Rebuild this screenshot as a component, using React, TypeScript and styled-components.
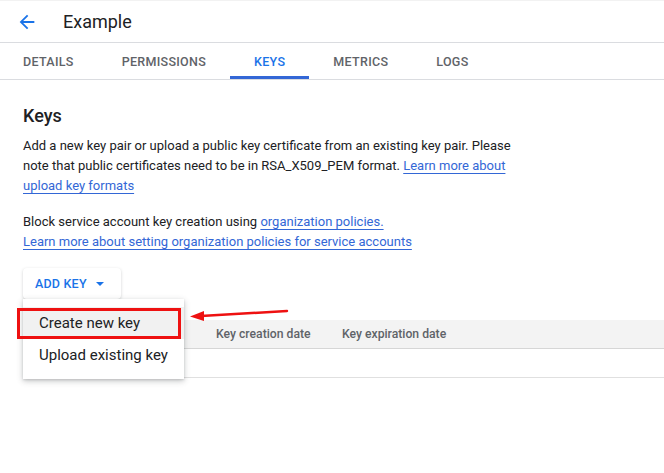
import React from "react";
import styled, { createGlobalStyle } from "styled-components";

const Global = createGlobalStyle`
  html, body { margin: 0; padding: 0; background: #fff; }
  body { font-family: Roboto, "Noto Sans", Arial, sans-serif; color: #202124; }
  * { box-sizing: border-box; }
`;

const Page = styled.div`
  position: relative;
  width: 664px;
  height: 473px;
  overflow: hidden;
  border-top: 1px solid #f2f2f2;
`;

const Header = styled.header`
  height: 42px;
  display: flex;
  align-items: center;
  padding-left: 16px;
  gap: 25px;
  border-bottom: 1px solid #dadce0;
`;

const Back = styled.span`
  display: flex;
  width: 22px;
  height: 22px;
  color: #1a73e8;
`;

const Title = styled.h1`
  margin: 0;
  font-size: 18px;
  font-weight: 400;
  color: #202124;
`;

const Tabs = styled.nav`
  display: flex;
  height: 37px;
  border-bottom: 1px solid #dadce0;
  margin-left: -1px;
`;

const Tab = styled.div<{ $active?: boolean }>`
  display: flex;
  align-items: center;
  padding: 0 24px;
  font-size: 12.5px;
  font-weight: 500;
  letter-spacing: 0.3px;
  color: ${(p) => (p.$active ? "#1a73e8" : "#5f6368")};
  border-bottom: 3px solid ${(p) => (p.$active ? "#3367d6" : "transparent")};
  padding-top: 3px;
`;

const Content = styled.main`
  padding: 24px 0 0 23px;
  position: relative;
`;

const H2 = styled.h2`
  margin: 0 0 8px;
  font-size: 18px;
  font-weight: 500;
  line-height: 24px;
`;

const P = styled.p`
  margin: 0 0 16px;
  max-width: 500px;
  font-size: 13px;
  line-height: 20px;
  color: #202124;
`;

const Link = styled.a`
  color: #3367d6;
  text-decoration: underline;
  text-underline-offset: 3px;
  text-decoration-thickness: 1px;
`;

const ButtonWrap = styled.div`
  position: relative;
  margin-top: 11px;
  width: 98px;
  z-index: 3;
`;

const AddButton = styled.button`
  display: flex;
  align-items: center;
  gap: 9px;
  width: 98px;
  height: 31px;
  padding: 0 0 0 12px;
  border: none;
  border-radius: 4px;
  background: #fff;
  box-shadow: 0 1px 3px rgba(60, 64, 67, 0.25);
  color: #1a73e8;
  font-family: Roboto, Arial, sans-serif;
  font-size: 12.5px;
  font-weight: 500;
  letter-spacing: 0.2px;
`;

const Caret = styled.span`
  width: 0;
  height: 0;
  border-left: 4px solid transparent;
  border-right: 4px solid transparent;
  border-top: 4px solid #1a73e8;
`;

const Menu = styled.ul`
  position: absolute;
  top: 31px;
  left: 0;
  width: 161px;
  margin: 0;
  padding: 8px 0;
  list-style: none;
  background: #fff;
  box-shadow: 0 2px 6px rgba(60, 64, 67, 0.3), 0 1px 2px rgba(60, 64, 67, 0.15);
`;

const MenuItem = styled.li<{ $hover?: boolean }>`
  height: 32px;
  display: flex;
  align-items: center;
  padding-left: 16px;
  font-size: 15px;
  color: #202124;
  background: ${(p) => (p.$hover ? "#f1f1f1" : "transparent")};
`;

const Highlight = styled.div`
  position: absolute;
  top: 9px;
  left: -6px;
  width: 164px;
  height: 31px;
  border: 3px solid #ee1111;
  pointer-events: none;
`;

const Arrow = styled.svg`
  position: absolute;
  left: 187px;
  top: 305px;
  z-index: 4;
`;

const Table = styled.div`
  margin-top: 21px;
`;

const HeadRow = styled.div`
  display: grid;
  grid-template-columns: 193px 126px 1fr;
  height: 29px;
  align-items: center;
  background: #f3f3f3;
  border-bottom: 1px solid #d6d6d6;
`;

const HeadCell = styled.div`
  font-size: 12.2px;
  font-weight: 500;
  color: #5f6368;
`;

const BodyRow = styled.div`
  height: 29px;
  border-bottom: 1px solid #e0e0e0;
`;

export default function App() {
  return (
    <>
      <Global />
      <Page>
        <Header>
          <Back>
            <svg width="22" height="22" viewBox="0 0 24 24">
              <path d="M20 11H7.83l5.59-5.59L12 4l-8 8 8 8 1.41-1.41L7.83 13H20v-2z" fill="currentColor" />
            </svg>
          </Back>
          <Title>Example</Title>
        </Header>
        <Tabs>
          <Tab>DETAILS</Tab>
          <Tab>PERMISSIONS</Tab>
          <Tab $active>KEYS</Tab>
          <Tab>METRICS</Tab>
          <Tab>LOGS</Tab>
        </Tabs>
        <Content>
          <H2>Keys</H2>
          <P>
            Add a new key pair or upload a public key certificate from an existing key pair. Please
            note that public certificates need to be in RSA_X509_PEM format.{" "}
            <Link>Learn more about upload key formats</Link>
          </P>
          <P>
            Block service account key creation using <Link>organization policies.</Link>
            <br />
            <Link>Learn more about setting organization policies for service accounts</Link>
          </P>
          <ButtonWrap>
            <AddButton>
              ADD KEY <Caret />
            </AddButton>
            <Menu>
              <MenuItem $hover>Create new key</MenuItem>
              <MenuItem>Upload existing key</MenuItem>
              <Highlight />
            </Menu>
          </ButtonWrap>
          <Table>
            <HeadRow>
              <span />
              <HeadCell>Key creation date</HeadCell>
              <HeadCell>Key expiration date</HeadCell>
            </HeadRow>
            <BodyRow />
          </Table>
        </Content>
        <Arrow width="104" height="16" viewBox="0 0 104 16">
          <line x1="100" y1="5" x2="14" y2="10" stroke="#ee1111" strokeWidth="2.5" strokeLinecap="round" />
          <polygon points="3,10.5 17,5 17,15" fill="#ee1111" />
        </Arrow>
      </Page>
    </>
  );
}
